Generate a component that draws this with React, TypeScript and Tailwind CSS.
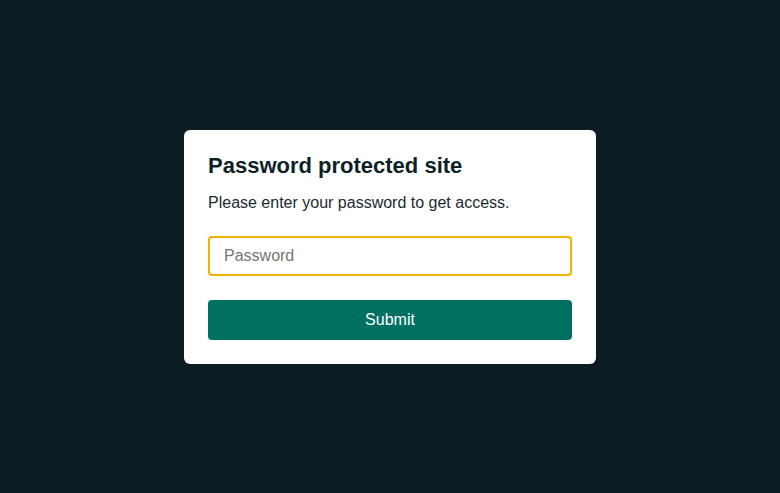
import React from 'react';

export default function App() {
  return (
    <div
      className="flex h-[493px] w-full items-center justify-center bg-[#0c1c23]"
      style={{ fontFamily: '"Liberation Sans", Arial, sans-serif' }}
    >
      <form
        className="w-[412px] rounded-[6px] bg-white p-6"
        onSubmit={(event) => event.preventDefault()}
      >
        <h1 className="text-[22px] font-bold leading-[24px] text-[#0f1f27]">Password protected site</h1>
        <p className="mt-[13px] text-base leading-6 text-[#1c2a31]">Please enter your password to get access.</p>
        <input
          type="password"
          autoFocus
          placeholder="Password"
          className="mt-[21px] block h-10 w-full rounded-[4px] border-2 border-[#f0b400] px-[14px] text-base text-[#0c1c23] caret-[#0c1c23] outline-none placeholder:text-[#757575]"
        />
        <button
          type="submit"
          className="mt-6 block h-10 w-full rounded-[4px] bg-[#007063] text-base text-white"
        >
          Submit
        </button>
      </form>
    </div>
  );
}
